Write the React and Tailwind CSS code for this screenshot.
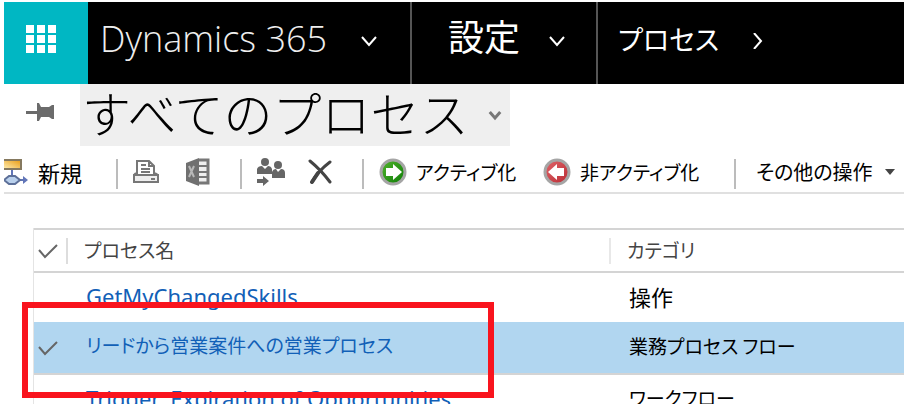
import React from "react";

const Chevron = ({ className, d = "M2 4 L9 12 L16 4", width = 2 }) => (
  <svg viewBox="0 0 18 16" className={className} fill="none" stroke="currentColor" strokeWidth={width} aria-hidden="true">
    <path d={d} />
  </svg>
);

const Waffle = () => (
  <svg viewBox="0 0 30 28" className="h-7 w-[30px]" fill="#fff" aria-hidden="true">
    {[0, 10, 20].map((y) =>
      [0, 11, 22].map((x) => <rect key={`${x}-${y}`} x={x} y={y} width="8" height="8" />)
    )}
  </svg>
);

const Pin = () => (
  <svg viewBox="0 0 28 18" className="h-[18px] w-7 shrink-0" fill="#6b6b6b" aria-hidden="true">
    <rect x="0" y="8" width="12" height="3" />
    <path d="M11 0h2l2 4h8l3-2h2v14h-2l-3-2h-8l-2 4h-2z" />
  </svg>
);

const NewIcon = () => (
  <svg viewBox="0 0 24 28" className="h-7 w-6 shrink-0" aria-hidden="true">
    <defs>
      <linearGradient id="step" x1="0" y1="1" x2="1" y2="0">
        <stop offset="0" stopColor="#fff0b8" />
        <stop offset="1" stopColor="#e89a10" />
      </linearGradient>
    </defs>
    <rect x="-1" y="2" width="18" height="9" fill="url(#step)" stroke="#85795f" strokeWidth="2" />
    <path d="M8 12v8M15 22h7" fill="none" stroke="#6175b8" strokeWidth="2" />
    <path d="M19 18l5 4-5 4z" fill="#6175b8" />
    <path d="M0 22l5-4h6l5 4-5 4H5z" fill="#b9d0ec" stroke="#5d7099" strokeWidth="2" />
  </svg>
);

const PrintIcon = () => (
  <svg viewBox="0 0 28 26" className="h-[26px] w-7" fill="none" stroke="#777" strokeWidth="2" aria-hidden="true">
    <path d="M5 16V2h12l5 5v9M17 2v5h5M9 6h5M9 10h9M9 13h9" />
    <path d="M2 16h24v7H2zM2 16l2-2M26 16l-3-2" fill="#eee" />
    <path d="M19 20h4" />
  </svg>
);

const ExcelIcon = () => (
  <svg viewBox="0 0 24 28" className="h-7 w-6" aria-hidden="true">
    <path d="M0 5L13 0v28L0 23z" fill="#707070" />
    <path d="M3 8l5 11M8 8L3 19" stroke="#b8b8b8" strokeWidth="2" />
    <path d="M13 2h9v23h-9" fill="#eee" stroke="#777" strokeWidth="3" />
    <path d="M13 8h9M13 14h9M13 19h9" stroke="#777" strokeWidth="2" />
  </svg>
);

const AssignIcon = () => (
  <svg viewBox="0 0 30 28" className="h-7 w-[30px]" fill="#666" aria-hidden="true">
    <circle cx="9" cy="4" r="4" />
    <path d="M1 16V11q1-3 5-3l3 3 3-3q3 0 4 3v5z" />
    <circle cx="22" cy="7" r="4" />
    <path d="M16 20v-6q1-3 4-3l2 3 3-3q4 0 4 4v5z" />
    <path d="M1 21h6v-3l6 5-6 5v-3H1z" />
  </svg>
);

const DeleteIcon = () => (
  <svg viewBox="0 0 24 26" className="h-[26px] w-6" fill="none" strokeLinecap="round" aria-hidden="true">
    <path d="M2 2q11 9 20 21" stroke="#444" strokeWidth="3" />
    <path d="M22 3Q10 12 4 23" stroke="#444" strokeWidth="3" />
    <path d="M10 14l-6 9" stroke="#444" strokeWidth="4" />
  </svg>
);

const ArrowBadge = ({ id, light, dark, d }) => (
  <svg viewBox="0 0 30 30" className="size-[30px] shrink-0" aria-hidden="true">
    <defs>
      <linearGradient id={id} x1="0" y1="0" x2="1" y2="1">
        <stop offset="0" stopColor={light} />
        <stop offset="1" stopColor={dark} />
      </linearGradient>
    </defs>
    <circle cx="15" cy="15" r="12" fill={`url(#${id})`} stroke="#a5a5a5" strokeWidth="3" />
    <path d={d} fill="#fff" />
  </svg>
);

const Check = () => (
  <svg viewBox="0 0 20 16" className="h-4 w-5" fill="none" stroke="#666" strokeWidth="2" aria-hidden="true">
    <path d="M1 7l6 7L19 2" />
  </svg>
);

const Separator = () => <span className="mt-1 h-[30px] w-0.5 shrink-0 bg-[#bcbcbc]" />;

const rows = [
  { name: "GetMyChangedSkills", category: "操作", nameSize: "text-[22px]", categorySize: "text-[22px]" },
  { name: "リードから営業案件への営業プロセス", category: "業務プロセス フロー", nameSize: "text-[19px]", categorySize: "text-[19px]", selected: true },
  { name: "Trigger_Expiration of Opportunities", category: "ワークフロー", nameSize: "text-[22px]", categorySize: "text-[19px]" },
];

export default function App() {
  return (
    <div className="overflow-hidden bg-white pt-0.5 pb-2 pl-1 font-['Noto_Sans_CJK_JP',sans-serif] text-[19px] text-black [font-feature-settings:'palt']">
      <header className="flex h-[82px] bg-black text-white">
        <button aria-label="アプリ" className="flex w-[84px] shrink-0 items-center justify-center bg-[#00b7c3] pr-2.5 pb-2">
          <Waffle />
        </button>
        <button className="flex w-[324px] shrink-0 items-center border-r-2 border-[#555] pb-2 pl-3 text-left">
          <span className="w-[260px] font-['Open_Sans',sans-serif] text-4xl leading-10 font-light whitespace-nowrap text-[#eee]">Dynamics 365</span>
          <Chevron className="mt-1 h-4 w-[18px]" />
        </button>
        <button className="flex w-[186px] shrink-0 items-center border-r-2 border-[#555] pb-2 pl-9 text-left">
          <span className="w-[100px] pb-2 text-4xl leading-10 whitespace-nowrap">設定</span>
          <Chevron className="mt-1 h-4 w-[18px]" />
        </button>
        <button className="flex shrink-0 items-center gap-[30px] pb-1 pl-5 text-left">
          <span className="pb-1 text-[27px] leading-10 whitespace-nowrap">プロセス</span>
          <Chevron className="h-4 w-[18px]" d="M5 0L12 8L5 16" />
        </button>
      </header>

      <div className="flex h-[62px] pl-[22px]">
        <button aria-label="ピン留め" className="flex w-[54px] shrink-0 items-center pb-1.5">
          <Pin />
        </button>
        <h1 className="flex w-[430px] shrink-0 items-center justify-between bg-[#efefef] pr-2 pl-0.5 text-[49px] font-light [font-feature-settings:normal]">
          <span className="pb-1.5 leading-[54px]">すべてのプロセス</span>
          <button aria-label="ビューの選択">
            <Chevron className="h-3 w-3.5 text-[#777]" width={4} />
          </button>
        </h1>
      </div>

      <div role="toolbar" className="flex h-12 items-center border-b-2 border-[#e0e0e0] pt-1.5 whitespace-nowrap">
        <button className="flex w-[112px] shrink-0 items-center gap-2.5"><NewIcon /><span className="text-[22px] leading-7">新規</span></button>
        <Separator />
        <button aria-label="印刷" className="ml-3.5 w-[54px] shrink-0"><PrintIcon /></button>
        <button aria-label="Excel にエクスポート" className="w-[54px] shrink-0"><ExcelIcon /></button>
        <Separator />
        <button aria-label="割り当て" className="ml-3.5 w-[52px] shrink-0"><AssignIcon /></button>
        <button aria-label="削除" className="w-[54px] shrink-0"><DeleteIcon /></button>
        <Separator />
        <button className="ml-3.5 flex w-[164px] shrink-0 items-center gap-2">
          <ArrowBadge id="on" light="#54b52e" dark="#0b7b05" d="M8 11h7V7l9 8-9 8v-4H8z" />アクティブ化
        </button>
        <button className="flex w-[192px] shrink-0 items-center gap-2">
          <ArrowBadge id="off" light="#e0666b" dark="#b92a32" d="M22 11h-7V7l-9 8 9 8v-4h7z" />非アクティブ化
        </button>
        <Separator />
        <button className="ml-5 flex shrink-0 items-center gap-3">
          <span className="text-xl">その他の操作</span>
          <svg viewBox="0 0 10 6" className="h-1.5 w-2.5" fill="#444" aria-hidden="true"><path d="M0 0h10L5 6z" /></svg>
        </button>
      </div>

      <div className="relative mt-[34px] ml-[29px]">
        <div className="h-44 overflow-hidden border-l border-[#e4e4e4]">
          <table className="w-full table-fixed border-collapse text-left whitespace-nowrap">
            <thead className="text-[#444]">
              <tr className="h-[43px] border-y-2 border-[#d4d4d4]">
                <th className="w-[50px] p-0 pl-1"><span className="flex h-[26px] w-[30px] items-center border-r-2 border-[#ddd]"><Check /></span></th>
                <th className="w-[525px] p-0 font-normal">プロセス名</th>
                <th className="p-0 font-normal"><span className="flex h-[26px] items-center border-l-2 border-[#e8e8e8] pl-4">カテゴリ</span></th>
              </tr>
            </thead>
            <tbody>
              {rows.map((r) => (
                <tr key={r.name} className={r.selected ? "h-[52px] border-b-2 border-[#d4d4d4] bg-[#b1d6f0]" : "h-[50px]"}>
                  <td className="p-0 pl-1">{r.selected && <Check />}</td>
                  <td className={`p-0 pb-1 pl-0.5 leading-7 ${r.nameSize}`}>
                    <a href="#" className="font-['Noto_Sans','Noto_Sans_CJK_JP',sans-serif] text-[#1160b7]">{r.name}</a>
                  </td>
                  <td className={`p-0 pb-1 pl-5 leading-7 ${r.categorySize}`}>{r.category}</td>
                </tr>
              ))}
            </tbody>
          </table>
        </div>
        <div className="pointer-events-none absolute top-[74px] -left-[11px] h-24 w-[472px] border-6 border-[#f9141e]" />
      </div>
    </div>
  );
}
